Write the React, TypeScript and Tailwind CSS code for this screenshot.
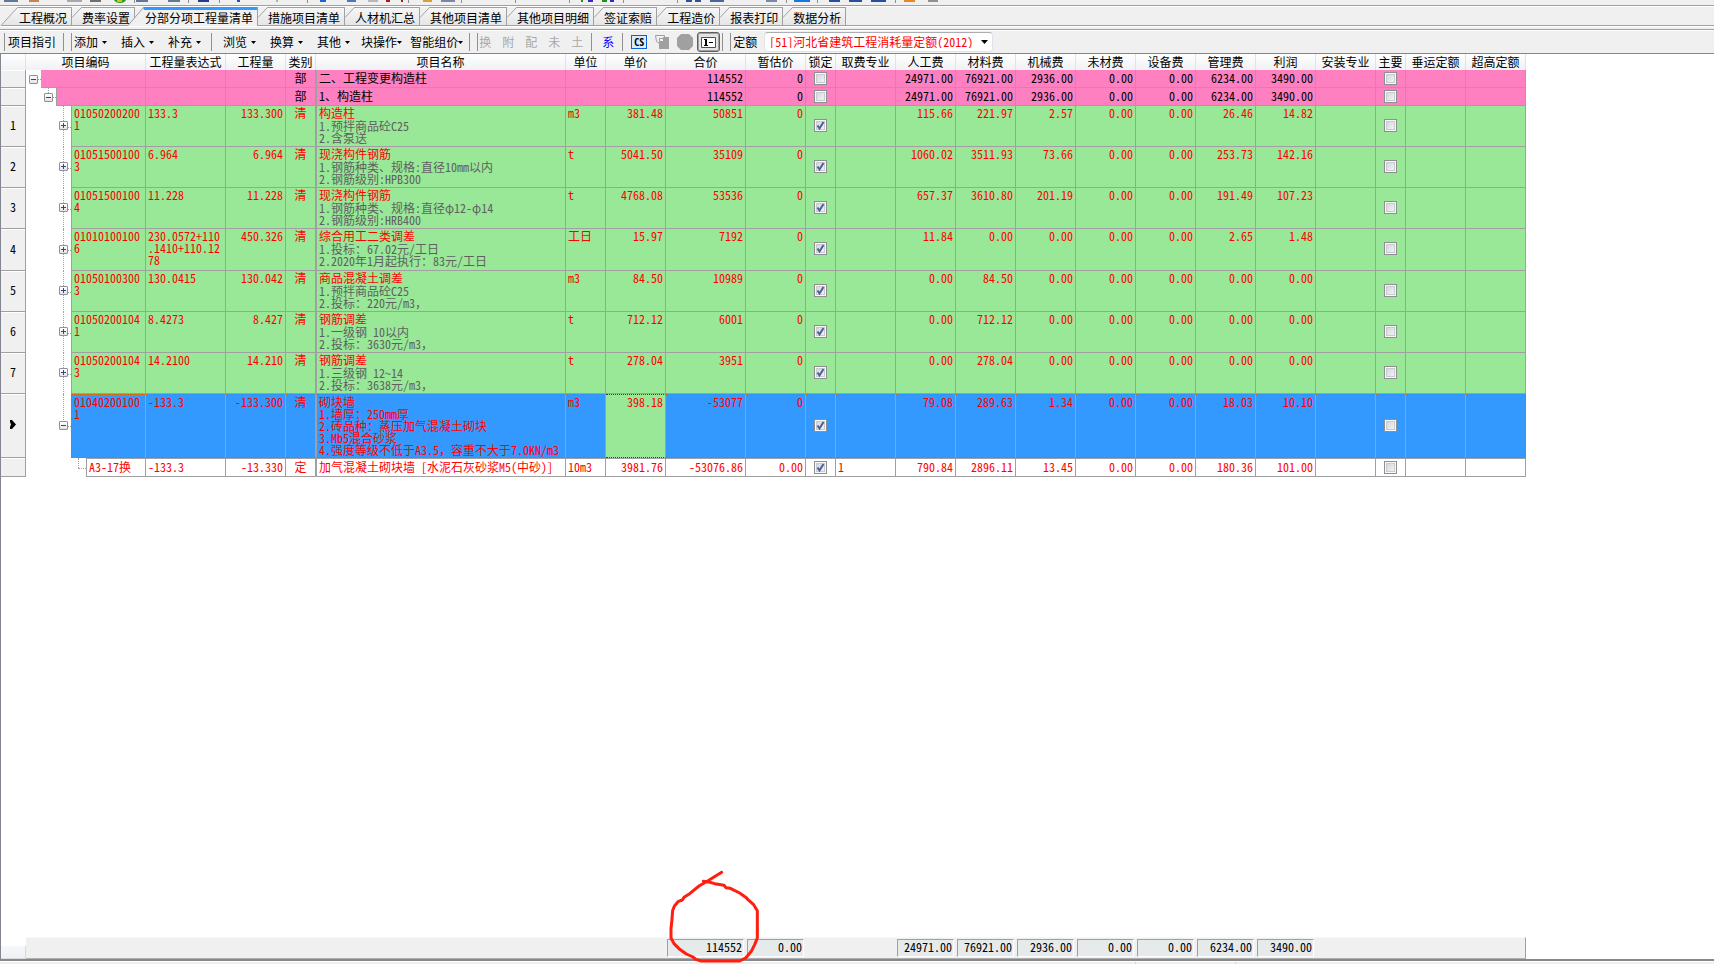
import { Fragment, useState } from "react";
import type { ReactNode } from "react";
import { clsx } from "clsx";

type RowKind = "section" | "item" | "selected" | "quota";

type Row = {
  no: string;
  kind: RowKind;
  level: 0 | 1 | 2 | 3;
  code: string;
  expr: string;
  qty: string;
  type: string;
  name: string;
  notes?: string[];
  unit: string;
  price: string;
  total: string;
  estimate: string;
  locked: boolean;
  feeType?: string;
  // 人工费, 材料费, 机械费, 未材费, 设备费, 管理费, 利润
  fees: string[];
};

const COLUMNS = [
  { label: "项目编码", width: "w-[120px]" },
  { label: "工程量表达式", width: "w-[80px]" },
  { label: "工程量", width: "w-[60px]" },
  { label: "类别", width: "w-[30px]" },
  { label: "项目名称", width: "w-[250px]" },
  { label: "单位", width: "w-[40px]" },
  { label: "单价", width: "w-[60px]" },
  { label: "合价", width: "w-[80px]" },
  { label: "暂估价", width: "w-[60px]" },
  { label: "锁定", width: "w-[30px]" },
  { label: "取费专业", width: "w-[60px]" },
  { label: "人工费", width: "w-[60px]" },
  { label: "材料费", width: "w-[60px]" },
  { label: "机械费", width: "w-[60px]" },
  { label: "未材费", width: "w-[60px]" },
  { label: "设备费", width: "w-[60px]" },
  { label: "管理费", width: "w-[60px]" },
  { label: "利润", width: "w-[60px]" },
  { label: "安装专业", width: "w-[60px]" },
  { label: "主要", width: "w-[30px]" },
  { label: "垂运定额", width: "w-[60px]" },
  { label: "超高定额", width: "w-[60px]" },
];

const SECTION_FEES = ["24971.00", "76921.00", "2936.00", "0.00", "0.00", "6234.00", "3490.00"];

const ROWS: Row[] = [
  {
    no: "", kind: "section", level: 0, code: "", expr: "", qty: "", type: "部",
    name: "二、工程变更构造柱", unit: "", price: "", total: "114552", estimate: "0",
    locked: false, fees: SECTION_FEES,
  },
  {
    no: "", kind: "section", level: 1, code: "", expr: "", qty: "", type: "部",
    name: "1、构造柱", unit: "", price: "", total: "114552", estimate: "0",
    locked: false, fees: SECTION_FEES,
  },
  {
    no: "1", kind: "item", level: 2, code: "01050200200\n1", expr: "133.3", qty: "133.300", type: "清",
    name: "构造柱", notes: ["1.预拌商品砼C25", "2.含泵送"], unit: "m3", price: "381.48",
    total: "50851", estimate: "0", locked: true,
    fees: ["115.66", "221.97", "2.57", "0.00", "0.00", "26.46", "14.82"],
  },
  {
    no: "2", kind: "item", level: 2, code: "01051500100\n3", expr: "6.964", qty: "6.964", type: "清",
    name: "现浇构件钢筋", notes: ["1.钢筋种类、规格:直径10mm以内", "2.钢筋级别:HPB300"], unit: "t", price: "5041.50",
    total: "35109", estimate: "0", locked: true,
    fees: ["1060.02", "3511.93", "73.66", "0.00", "0.00", "253.73", "142.16"],
  },
  {
    no: "3", kind: "item", level: 2, code: "01051500100\n4", expr: "11.228", qty: "11.228", type: "清",
    name: "现浇构件钢筋", notes: ["1.钢筋种类、规格:直径φ12-φ14", "2.钢筋级别:HRB400"], unit: "t", price: "4768.08",
    total: "53536", estimate: "0", locked: true,
    fees: ["657.37", "3610.80", "201.19", "0.00", "0.00", "191.49", "107.23"],
  },
  {
    no: "4", kind: "item", level: 2, code: "01010100100\n6", expr: "230.0572+110\n.1410+110.12\n78", qty: "450.326", type: "清",
    name: "综合用工二类调差", notes: ["1.投标：67.02元/工日", "2.2020年1月起执行：83元/工日"], unit: "工日", price: "15.97",
    total: "7192", estimate: "0", locked: true,
    fees: ["11.84", "0.00", "0.00", "0.00", "0.00", "2.65", "1.48"],
  },
  {
    no: "5", kind: "item", level: 2, code: "01050100300\n3", expr: "130.0415", qty: "130.042", type: "清",
    name: "商品混凝土调差", notes: ["1.预拌商品砼C25", "2.投标：220元/m3，"], unit: "m3", price: "84.50",
    total: "10989", estimate: "0", locked: true,
    fees: ["0.00", "84.50", "0.00", "0.00", "0.00", "0.00", "0.00"],
  },
  {
    no: "6", kind: "item", level: 2, code: "01050200104\n1", expr: "8.4273", qty: "8.427", type: "清",
    name: "钢筋调差", notes: ["1.一级钢 10以内", "2.投标：3630元/m3，"], unit: "t", price: "712.12",
    total: "6001", estimate: "0", locked: true,
    fees: ["0.00", "712.12", "0.00", "0.00", "0.00", "0.00", "0.00"],
  },
  {
    no: "7", kind: "item", level: 2, code: "01050200104\n3", expr: "14.2100", qty: "14.210", type: "清",
    name: "钢筋调差", notes: ["1.三级钢 12~14", "2.投标：3638元/m3，"], unit: "t", price: "278.04",
    total: "3951", estimate: "0", locked: true,
    fees: ["0.00", "278.04", "0.00", "0.00", "0.00", "0.00", "0.00"],
  },
  {
    no: "", kind: "selected", level: 2, code: "01040200100\n1", expr: "-133.3", qty: "-133.300", type: "清",
    name: "砌块墙",
    notes: ["1.墙厚：250mm厚", "2.砖品种：蒸压加气混凝土砌块", "3.Mb5混合砂浆", "4.强度等级不低于A3.5，容重不大于7.0KN/m3"],
    unit: "m3", price: "398.18", total: "-53077", estimate: "0", locked: true,
    fees: ["79.08", "289.63", "1.34", "0.00", "0.00", "18.03", "10.10"],
  },
  {
    no: "", kind: "quota", level: 3, code: "A3-17换", expr: "-133.3", qty: "-13.330", type: "定",
    name: "加气混凝土砌块墙 [水泥石灰砂浆M5(中砂)]", unit: "10m3", price: "3981.76",
    total: "-53076.86", estimate: "0.00", locked: true, feeType: "1",
    fees: ["790.84", "2896.11", "13.45", "0.00", "0.00", "180.36", "101.00"],
  },
];

// one entry per column, empty where the column has no total
const TOTALS = [
  "", "", "", "", "", "", "", "114552", "0.00", "", "",
  "24971.00", "76921.00", "2936.00", "0.00", "0.00", "6234.00", "3490.00",
  "", "", "", "",
];

const TABS = [
  "工程概况", "费率设置", "分部分项工程量清单", "措施项目清单", "人材机汇总", "其他项目清单",
  "其他项目明细", "签证索赔", "工程造价", "报表打印", "数据分析",
];

const FILL: Record<RowKind, string> = {
  section: "bg-[#ff80c0] text-black pt-[2px]",
  item: "bg-[#98e898] text-[#ff0000] pt-px",
  selected: "bg-[#3399ff] text-[#ff0000] pt-px",
  quota: "bg-white text-[#ff0000] pt-[2px]",
};

const EDGE: Record<RowKind, string> = {
  section: "border-b border-b-[#a0a0a0]",
  item: "border-b border-b-[#a0a0a0]",
  selected: "border-y border-dotted border-y-[#d06a10]",
  quota: "border-y border-y-[#a0a0a0]",
};

const HEIGHT: Record<RowKind, string> = {
  section: "h-[18px]",
  item: "h-[41px]",
  selected: "h-16",
  quota: "h-[19px]",
};

const INDENT = ["w-[15px]", "w-[30px]", "w-[45px]", "w-[60px]"];

function Columns() {
  return (
    <colgroup>
      <col className="w-[25px]" />
      {COLUMNS.map((c) => (
        <col key={c.label} className={c.width} />
      ))}
    </colgroup>
  );
}

// the lower edge of the main tool strip, where only the feet of the icons show
function IconStrip() {
  const marks: [number, number, string][] = [
    [4, 14, "#5f7896"], [29, 10, "#c08850"], [67, 15, "#a8a8a8"], [90, 11, "#707070"],
    [136, 12, "#5f7896"], [168, 12, "#5f7896"], [198, 11, "#203c90"], [237, 3, "#2050d0"],
    [276, 2, "#b0b0b0"], [320, 6, "#2060d0"], [347, 9, "#4878b8"], [368, 10, "#b8b8b8"],
    [386, 4, "#b01818"], [401, 2, "#b01818"], [423, 9, "#d8a038"], [441, 14, "#7888a8"],
    [581, 2, "#209020"], [588, 5, "#3030c0"], [602, 5, "#209020"], [610, 4, "#3030c0"],
    [686, 6, "#385090"], [695, 6, "#385090"], [710, 14, "#486898"], [766, 11, "#7888a8"],
    [794, 16, "#1878e0"], [829, 11, "#2850a0"], [849, 13, "#2850a0"], [871, 15, "#2850a0"],
    [904, 11, "#e88820"], [928, 10, "#909090"],
  ];
  const lines = [134, 188, 219, 307, 408, 461, 515, 569, 623, 677, 786, 817, 895];
  return (
    <div className="h-[5px] overflow-hidden bg-[#f0f0f0]">
      <svg width="960" height="5" aria-hidden="true">
        {marks.map(([x, w, color]) => (
          <rect key={x} x={x} y="0" width={w} height="2" fill={color} />
        ))}
        <path d="M114 0h12c-1 2-3 3-6 3s-5-1-6-3z" fill="#2c9a20" />
        <path d="M117 0h5v2h-5z" fill="#d8c020" />
        {lines.map((x) => (
          <rect key={x} x={x} y="0" width="1" height="3" fill="#909090" />
        ))}
      </svg>
    </div>
  );
}

function TabBar() {
  const [active, setActive] = useState(2);
  return (
    <div className="flex h-5 border-t border-t-white bg-[#f0f0f0]">
      {TABS.map((tab, i) => {
        const on = i === active;
        return (
          <button
            key={tab}
            onClick={() => setActive(i)}
            className={clsx(
              "relative h-[19px] shrink-0 border-r border-t border-[#a0a0a0] pr-1 pt-[3px] text-xs leading-3",
              i === 0 ? "pl-[19px]" : "pl-[10px]",
              on
                ? "z-10 border-t-0 bg-[#f0f0f0] pt-1"
                : "border-b border-b-[#a0a0a0] bg-linear-to-b from-[#f6f6f6] to-[#e6e6e6]",
            )}
          >
            {on && <span className="absolute left-2 right-0 top-0 h-[3px] bg-[#3399ff]" />}
            {on ? (
              <svg className="absolute -left-[7px] top-0" width="16" height="19" aria-hidden="true">
                <path d="M0 19L15 0.500L16 3V19z" fill="#f0f0f0" />
                <path d="M0 18.500L15.500 0.500" stroke="#a0a0a0" fill="none" />
              </svg>
            ) : i === 0 ? (
              <svg className="absolute -top-px left-0" width="18" height="19" aria-hidden="true">
                <path d="M0 0H18L1 19H0z" fill="#f0f0f0" />
                <path d="M1 18.500L17.500 0.500" stroke="#a0a0a0" fill="none" />
              </svg>
            ) : (
              <svg className="absolute -top-px left-0" width="10" height="11" aria-hidden="true">
                <path d="M0 0H9.500L0 10.500z" fill="#f0f0f0" />
                <path d="M0 10.500L9.500 0.500" stroke="#a0a0a0" fill="none" />
              </svg>
            )}
            <span className="relative">{tab}</span>
          </button>
        );
      })}
      <div className="flex-1 border-b border-b-[#a0a0a0]" />
    </div>
  );
}

function Arrow() {
  return (
    <svg width="5" height="3" viewBox="0 0 5 3" aria-hidden="true">
      <path d="M0 0h5L2.500 3z" fill="#000" />
    </svg>
  );
}

function Divider({ className }: { className?: string }) {
  return <span className={clsx("h-[18px] w-px bg-[#909090]", className)} />;
}

function Menu({ label, tight }: { label: string; tight?: boolean }) {
  return (
    <button className={clsx("flex items-center", tight ? "gap-0" : "gap-1")}>
      {label}
      <Arrow />
    </button>
  );
}

function Toolbar() {
  return (
    <div className="flex h-[23px] items-center whitespace-nowrap border-t border-t-white bg-[#f0f0f0] text-xs leading-3">
      <Divider className="ml-1" />
      <button className="ml-[3px]">项目指引</button>
      <Divider className="ml-[7px]" />
      <Divider className="ml-[7px]" />
      <div className="ml-[2px] flex gap-[14px]">
        <Menu label="添加" />
        <Menu label="插入" />
        <Menu label="补充" />
      </div>
      <Divider className="ml-[10px]" />
      <div className="ml-[11px] flex gap-[14px]">
        <Menu label="浏览" />
        <Menu label="换算" />
        <Menu label="其他" />
      </div>
      <div className="ml-[11px] flex gap-2">
        <Menu label="块操作" tight />
        <Menu label="智能组价" tight />
      </div>
      <Divider className="ml-[6px]" />
      <Divider className="ml-[7px]" />
      <div className="ml-px flex gap-[11px] text-[#a8a8a8]">
        {["换", "附", "配", "未", "土"].map((t) => (
          <button key={t} disabled>
            {t}
          </button>
        ))}
      </div>
      <Divider className="ml-2" />
      <button className="ml-[10px] text-[#0000ff]">系</button>
      <Divider className="ml-2" />
      <button
        aria-label="CS"
        className="ml-2 h-[14px] w-4 border border-[#0a64d8] bg-[#d8ecff] text-center text-[10px] font-bold"
      >
        CS
      </button>
      <button aria-label="复制" disabled className="ml-2">
        <svg width="14" height="14" viewBox="0 0 14 14" aria-hidden="true">
          <path d="M0.500 0.500h9v3h-5v5l-3-2z" fill="#f0f0f0" stroke="#a0a0a0" />
          <path d="M4 6h4V2h6v12H4z" fill="#a0a0a0" />
        </svg>
      </button>
      <button aria-label="停止" disabled className="ml-2">
        <svg width="16" height="16" viewBox="0 0 16 16" aria-hidden="true">
          <path d="M4 0h8l4 4v8l-4 4H4l-4-4V4z" fill="#a0a0a0" />
        </svg>
      </button>
      <button
        aria-label="层级"
        aria-pressed="true"
        className="ml-1 flex h-5 w-[23px] items-center justify-center rounded-[3px] border border-[#606060] bg-[#e4e4e4] shadow-[inset_0_0_0_1px_#a0a0a0]"
      >
        <svg width="15" height="11" viewBox="0 0 15 11" aria-hidden="true">
          <path d="M0.500 0.500h14v10h-14z" fill="#fff" stroke="#505050" />
          <path d="M3 2h3v6h1v1H3V8h1V3H3zM8 5h4v1H8z" fill="#000" />
        </svg>
      </button>
      <Divider className="ml-[2px]" />
      <Divider className="ml-[7px]" />
      <label htmlFor="quota" className="ml-[2px]">
        定额
      </label>
      <div className="relative ml-[7px] flex items-center">
        <select
          id="quota"
          className="h-5 w-[229px] appearance-none rounded-sm border border-[#e2e3ea] border-t-[#abadb3] bg-white pl-1 leading-3 text-[#ff0000]"
        >
          <option>[51]河北省建筑工程消耗量定额(2012)</option>
        </select>
        <svg className="pointer-events-none absolute right-[5px]" width="7" height="4" aria-hidden="true">
          <path d="M0 0h7L3.500 4z" fill="#000" />
        </svg>
      </div>
    </div>
  );
}

function CheckBox({ label, defaultChecked }: { label: string; defaultChecked?: boolean }) {
  return (
    <span className="mx-auto grid size-[13px]">
      <input
        type="checkbox"
        aria-label={label}
        defaultChecked={defaultChecked}
        className="peer col-start-1 row-start-1 size-[13px] appearance-none border border-[#8e8f8f] bg-linear-to-br from-[#ccd0d6] to-[#fafafa] shadow-[inset_0_0_0_1px_#f8f8f8,inset_0_0_0_2px_#c8ccd2]"
      />
      <svg
        className="pointer-events-none invisible z-10 col-start-1 row-start-1 peer-checked:visible"
        width="13"
        height="13"
        viewBox="0 0 13 13"
        aria-hidden="true"
      >
        <path d="M3.500 6.500L5.500 9.500L9.500 3" fill="none" stroke="#4a5f97" strokeWidth="2" />
      </svg>
    </span>
  );
}

function TreeBranch({ row }: { row: Row }) {
  const leaf = row.level === 3;
  const through = row.kind === "item";
  return (
    <div className={clsx("flex shrink-0 justify-end", INDENT[row.level])}>
      <div className={clsx("relative flex w-[15px] items-center justify-center", row.level === 2 && "pb-[2px]")}>
        {row.level > 0 && (
          <span
            className={clsx(
              "absolute left-[7px] top-0 border-l border-dotted border-[#a0a0a0]",
              through ? "h-full" : "h-1/2",
            )}
          />
        )}
        <span className="absolute left-[7px] right-0 top-1/2 border-t border-dotted border-[#a0a0a0]" />
        {!leaf && (
          <button
            aria-label={through ? "展开" : "折叠"}
            className="relative flex size-[9px] items-center justify-center rounded-[1px] border border-[#919191] bg-linear-to-b from-white to-[#e4e4e4]"
          >
            <svg width="5" height="5" aria-hidden="true">
              <path d={through ? "M0 2.500h5M2.500 0v5" : "M0 2.500h5"} stroke="#2b479c" />
            </svg>
          </button>
        )}
      </div>
    </div>
  );
}

function GridRow({ row, index }: { row: Row; index: number }) {
  const selected = row.kind === "selected";
  const height = row.no === "4" ? "h-[42px]" : HEIGHT[row.kind];
  const cell = clsx(
    "border-r border-r-[#a0a0a0] px-[2px] align-top",
    selected && "[border-right-style:solid]",
    FILL[row.kind],
    EDGE[row.kind],
  );
  const boxCell = clsx(cell, "px-0! pt-0! align-middle!", row.level === 2 && "pb-[2px]");
  const key = row.name + index;

  const num = (value: string): ReactNode => <td className={clsx(cell, "text-right")}>{value}</td>;

  return (
    <tr className={height}>
      <th
        scope="row"
        className={clsx(
          "border-b border-r border-[#a0a0a0] bg-[#f0f0f0] text-center align-middle font-normal shadow-[inset_0_1px_0_#fff]",
          row.level === 2 && "pb-[2px]",
          height,
        )}
      >
        {selected ? (
          <svg className="mx-auto" width="6" height="9" viewBox="0 0 6 9" aria-label="当前行">
            <path d="M0 0h2l4 4.500L2 9H0V7l1-2.500L0 2z" fill="#000" />
          </svg>
        ) : (
          row.no
        )}
      </th>
      <td className={clsx("border-r border-r-[#a0a0a0] bg-white p-0", height)}>
        <div className="flex h-full">
          <TreeBranch row={row} />
          <div
            className={clsx(
              "flex-1 whitespace-pre pl-[2px]",
              FILL[row.kind],
              EDGE[row.kind],
              row.level > 0 && "border-l border-l-[#a0a0a0]",
              selected && "border-l-[#d06a10]",
            )}
          >
            {row.code}
          </div>
        </div>
      </td>
      <td className={clsx(cell, "whitespace-pre")}>{row.expr}</td>
      {num(row.qty)}
      <td className={clsx(cell, "text-center")}>{row.type}</td>
      <td
        className={clsx(
          cell,
          "whitespace-nowrap border-l border-l-[#a0a0a0]",
          selected && "[border-left-style:solid]",
        )}
      >
        {row.name}
        {row.notes && (
          <div className={clsx(!selected && "mt-px text-[#606060]")}>
            {row.notes.map((n) => (
              <div key={n}>{n}</div>
            ))}
          </div>
        )}
      </td>
      <td className={cell}>{row.unit}</td>
      {selected ? (
        <td className="border-y border-r border-dotted border-y-[#602080] border-r-[#a0a0a0] bg-[#98e898] px-[2px] pt-px text-right align-top text-[#ff0000] [border-right-style:solid]">
          {row.price}
        </td>
      ) : (
        num(row.price)
      )}
      {num(row.total)}
      {num(row.estimate)}
      <td className={boxCell}>
        <CheckBox label={`锁定 ${key}`} defaultChecked={row.locked} />
      </td>
      <td className={cell}>{row.feeType}</td>
      {row.fees.map((fee, i) => (
        <Fragment key={i}>{num(fee)}</Fragment>
      ))}
      <td className={cell} />
      <td className={boxCell}>
        <CheckBox label={`主要 ${key}`} />
      </td>
      <td className={cell} />
      <td className={clsx(cell, selected && "border-r-[#d06a10] [border-right-style:dotted]!")} />
    </tr>
  );
}

function BillGrid() {
  return (
    <table className="w-[1525px] table-fixed border-separate border-spacing-0">
      <Columns />
      <thead>
        <tr className="h-4">
          <th className="border-r border-[#e0e3e8] bg-linear-to-b from-white to-[#eff1f4]" aria-label="行号" />
          {COLUMNS.map((c) => (
            <th
              key={c.label}
              scope="col"
              className="h-4 whitespace-nowrap border-r border-[#dfe2e6] bg-linear-to-b from-white to-[#eff1f4] p-0 text-center font-normal"
            >
              {c.label}
            </th>
          ))}
        </tr>
      </thead>
      <tbody>
        {ROWS.map((row, i) => (
          <GridRow key={i} row={row} index={i} />
        ))}
      </tbody>
    </table>
  );
}

function Scribble() {
  return (
    <svg
      className="pointer-events-none absolute -bottom-[6px] left-[3px] z-20"
      width="92"
      height="95"
      viewBox="88 28 276 285"
      aria-hidden="true"
    >
      <path
        d="M246 38L205 63L178 79L150 102L133 113L128 121L115 126L105 138L99 152L96 190L94 205V235L103 252L118 267L140 283L160 292L168 299L185 304H300L318 295L335 275L345 255L353 235V153L342 135L325 120L320 114L300 100L272 86L259 84L253 77L225 72L208 67L191 65"
        fill="none"
        stroke="#ff1e10"
        strokeWidth="9"
        strokeLinejoin="round"
        strokeLinecap="round"
      />
    </svg>
  );
}

function TotalsBar() {
  return (
    <div className="flex h-[22px]">
      <table className="w-[1525px] table-fixed border-separate border-spacing-0">
        <Columns />
        <tbody>
          <tr className="h-[22px]">
            <td className="bg-white p-0 align-bottom">
              <div className="h-[13px] border-b border-r border-[#d8dade] bg-linear-to-b from-[#f6f7f9] to-[#eff1f4]" />
            </td>
            {TOTALS.map((total, i) => (
              <td
                key={i}
                className={clsx(
                  "relative border-b border-b-[#b0b0b0] border-t border-t-[#f8f8f8] bg-[#f0f0f0] p-0",
                  i === TOTALS.length - 1 && "border-r border-r-[#a0a0a0]",
                )}
              >
                {total && (
                  <div className="ml-px mr-[2px] h-[18px] border border-b-white border-l-[#a0a0a0] border-r-white border-t-[#a0a0a0] bg-[#e6eaeb] pr-px pt-px text-right">
                    {total}
                  </div>
                )}
                {i === 7 && <Scribble />}
              </td>
            ))}
          </tr>
        </tbody>
      </table>
    </div>
  );
}

export default function App() {
  return (
    <div className="flex h-screen flex-col overflow-hidden bg-white font-['Noto_Sans_Mono_CJK_SC','Noto_Sans_CJK_SC',sans-serif] text-xs leading-3 text-black">
      <IconStrip />
      <div className="border-t border-[#a0a0a0]">
        <TabBar />
      </div>
      <div className="h-[3px] border-t border-white bg-[#f0f0f0]" />
      <div className="border-t border-[#a0a0a0]">
        <Toolbar />
      </div>
      <main className="flex flex-1 flex-col border-l border-t border-[#82868f]">
        <div className="flex-1">
          <BillGrid />
        </div>
        <TotalsBar />
      </main>
      <div className="h-[2px] bg-[#85888c]" />
      <footer className="flex h-[3px] border-t border-white bg-[#f1eeee]">
        <span className="ml-[1135px] w-px bg-[#d8d6d6]" />
        <span className="ml-[99px] w-px bg-[#d8d6d6]" />
      </footer>
    </div>
  );
}
